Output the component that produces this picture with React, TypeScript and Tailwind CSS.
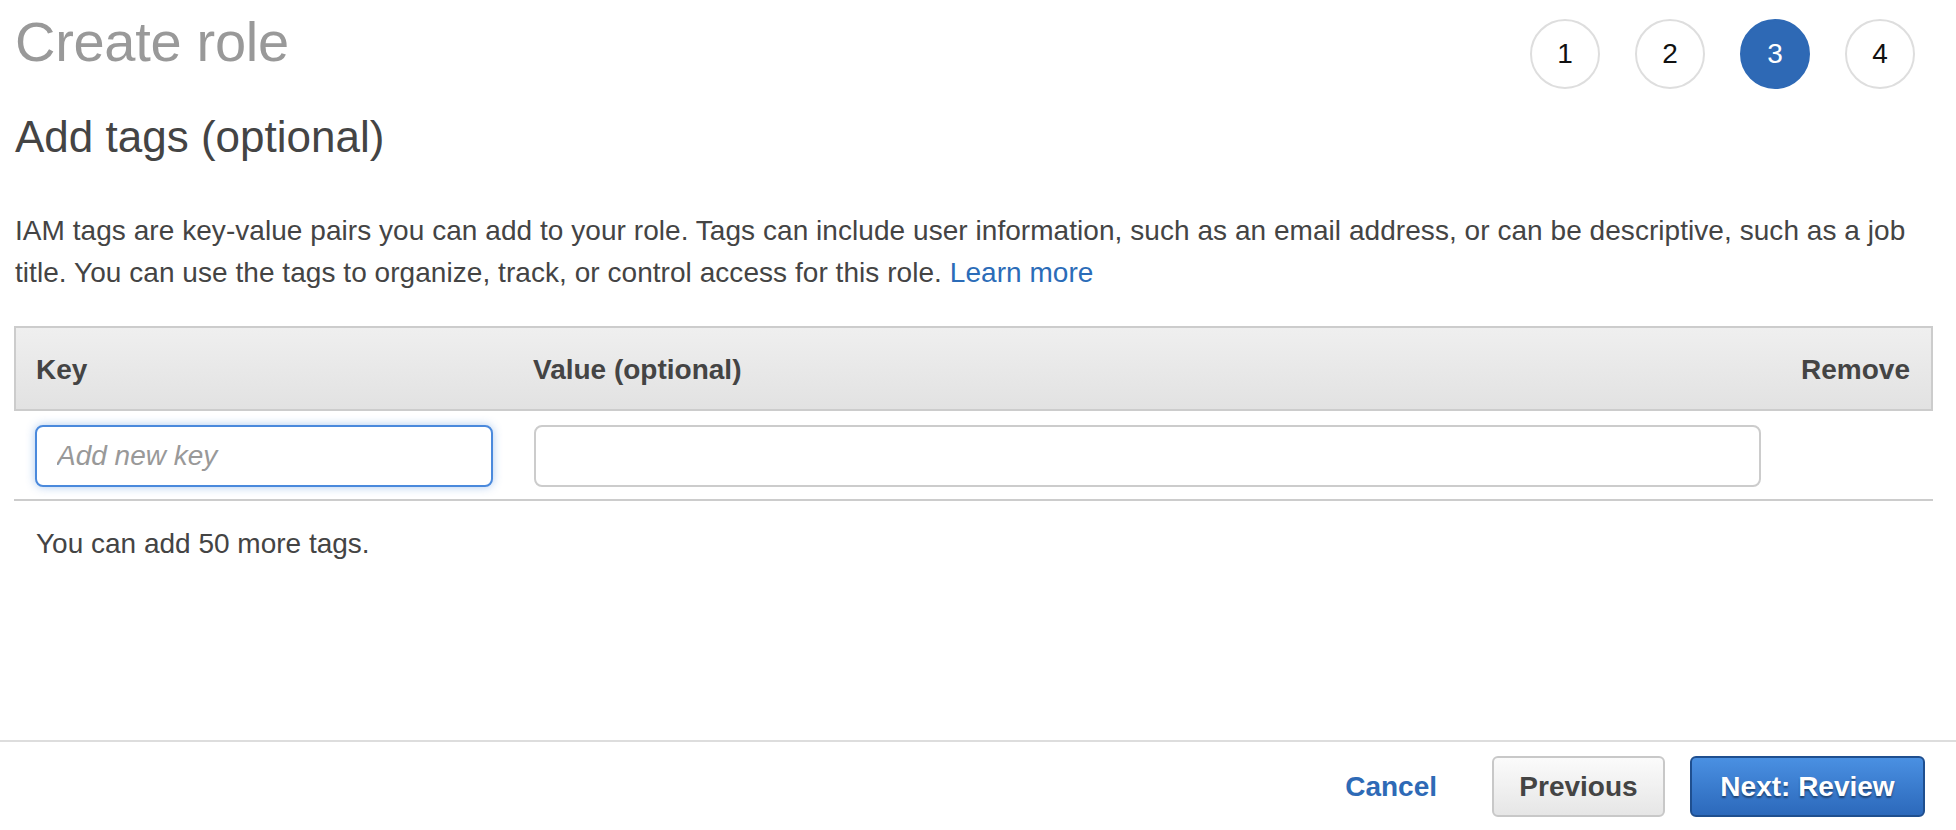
import React from "react";

const steps = [1, 2, 3, 4];

export default function App() {
  return (
    <div className="h-[830px] w-full bg-white flex flex-col font-['Liberation_Sans',Arial,sans-serif] text-[#444]">
      <div className="px-[14px] flex-1">
        <div className="flex items-start justify-between">
          <h1 className="mt-[14px] text-[56px] leading-[56px] text-[#999] font-normal pl-px tracking-[-0.3px]">Create role</h1>
          <div className="mt-[19px] mr-[27px] flex gap-[35px]">
            {steps.map((n) => (
              <div
                key={n}
                className={
                  n === 3
                    ? "w-[70px] h-[70px] rounded-full bg-[#2e69b5] border-2 border-[#2e69b5] text-white flex items-center justify-center text-[28px]"
                    : "w-[70px] h-[70px] rounded-full bg-white border-2 border-[#dedede] text-[#111] flex items-center justify-center text-[28px]"
                }
              >
                {n}
              </div>
            ))}
          </div>
        </div>

        <h2 className="mt-[26px] text-[44px] leading-[44px] font-normal text-[#444] pl-px">Add tags (optional)</h2>

        <p className="mt-[51px] text-[28px] leading-[42px] text-[#444] pl-px pr-[10px] tracking-[0.05px]">
          IAM tags are key-value pairs you can add to your role. Tags can include user information, such as an email address, or can be descriptive, such as a job title. You can use the tags to organize, track, or control access for this role.{" "}
          <a className="text-[#2b6cb8]">Learn more</a>
        </p>

        <div className="mt-[32px] mr-[9px]">
          <div className="flex border-2 border-[#cccccc] bg-gradient-to-b from-[#efefef] to-[#e2e2e2] pl-[20px] pr-[21px] pt-[26px] pb-[23px] text-[28px] leading-[32px] font-bold text-[#444]">
            <div className="w-[497px]">Key</div>
            <div className="flex-1">Value (optional)</div>
            <div>Remove</div>
          </div>
          <div className="flex gap-[41px] pl-[21px] pt-[14px] pb-[12px] border-b-2 border-[#cccccc]">
            <input
              placeholder="Add new key"
              className="w-[458px] h-[62px] rounded-[8px] border-2 border-[#4a89dc] shadow-[0_0_10px_rgba(74,137,220,0.45)] px-[20px] text-[28px] italic placeholder:text-[#999] outline-none bg-white"
            />
            <input className="w-[1227px] h-[62px] rounded-[8px] border-2 border-[#cccccc] px-[20px] text-[28px] outline-none bg-white" />
          </div>
        </div>

        <p className="mt-[23px] pl-[22px] text-[28px] leading-[40px] text-[#444]">You can add 50 more tags.</p>
      </div>

      <div className="h-[90px] border-t-2 border-[#dddddd] flex items-start justify-end pt-[14px] pr-[31px]">
        <div className="flex items-center">
          <button className="text-[28px] font-bold text-[#2e6ab6] mr-[55px]">Cancel</button>
          <button className="w-[173px] h-[61px] rounded-[6px] border-2 border-[#c8c8c8] bg-gradient-to-b from-[#fbfbfb] to-[#e6e6e6] text-[28px] font-bold text-[#444] mr-[25px]">
            Previous
          </button>
          <button className="w-[235px] h-[61px] rounded-[6px] border-2 border-[#1f4f8f] bg-gradient-to-b from-[#4a90e2] to-[#2c69bb] text-[28px] font-bold text-white [text-shadow:0_2px_2px_rgba(0,0,0,0.45)]">
            Next: Review
          </button>
        </div>
      </div>
    </div>
  );
}
